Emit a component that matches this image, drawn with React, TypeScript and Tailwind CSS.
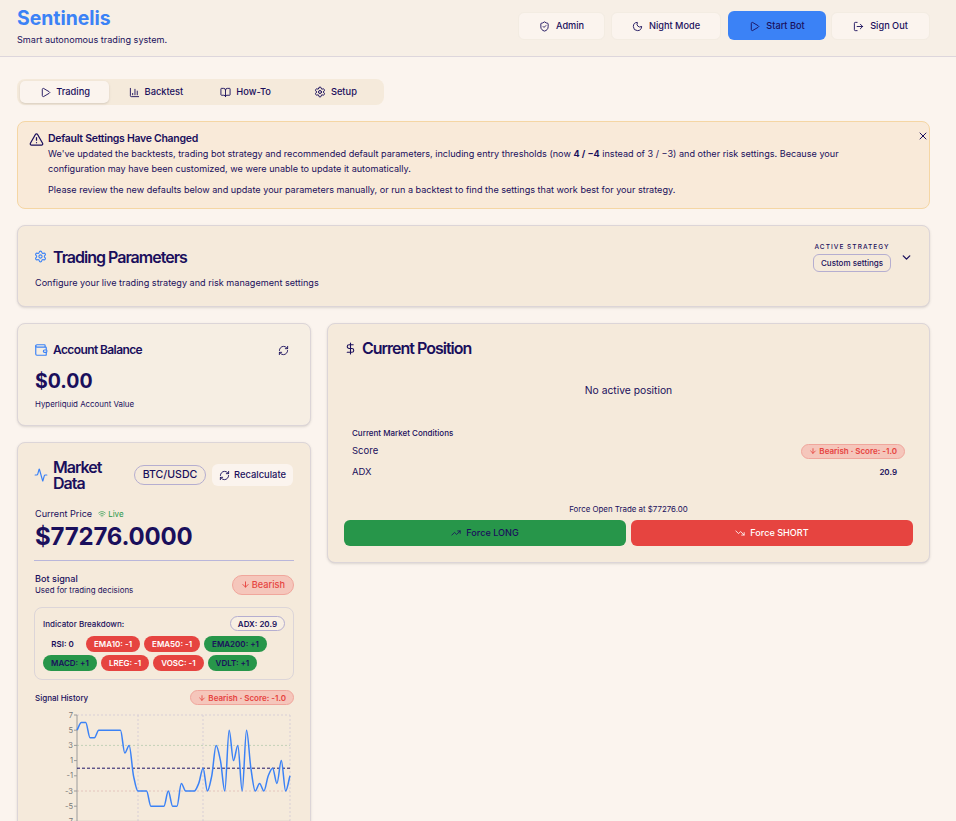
import React from "react";
import { ShieldCheck, Moon, Play, LogOut, ChartColumn, BookOpen, Settings, TriangleAlert, X, Wallet, RefreshCw, Activity, Wifi, ArrowDown, TrendingUp, TrendingDown, DollarSign, ChevronDown } from "lucide-react";

const vals = [5,6,6,4,4,5,5,5,5,5,5,2,3,-1,-3,-3,-3,-5,-5,-5,-5,-3,-5,-5,-2,-3,-3,-3,-2,0,-3,-1,3,1,-3,5,1,3,-3,5,0,-3,-2,-3,-1,0,-2,1,-3,-1];

function monotone(ys: number[], x0: number, dx: number, sy: (v: number) => number) {
  const pts = ys.map((v, i) => [x0 + i * dx, sy(v)]);
  const n = pts.length;
  const s: number[] = [];
  for (let i = 0; i < n - 1; i++) s.push((pts[i + 1][1] - pts[i][1]) / dx);
  const t: number[] = [s[0]];
  for (let i = 1; i < n - 1; i++) t.push(s[i - 1] * s[i] <= 0 ? 0 : (2 * s[i - 1] * s[i]) / (s[i - 1] + s[i]));
  t.push(s[n - 2]);
  let d = `M${pts[0][0]},${pts[0][1]}`;
  for (let i = 0; i < n - 1; i++) {
    d += `C${pts[i][0] + dx / 3},${pts[i][1] + (t[i] * dx) / 3} ${pts[i + 1][0] - dx / 3},${pts[i + 1][1] - (t[i + 1] * dx) / 3} ${pts[i + 1][0]},${pts[i + 1][1]}`;
  }
  return d;
}

function Chart() {
  const sy = (v: number) => 6 + (7 - v) * 7.6;
  const x0 = 43;
  const x1 = 256;
  const d = monotone(vals, x0, (x1 - x0) / (vals.length - 1), sy);
  return (
    <svg width="262" height="120" viewBox="0 0 262 120" className="block">
      <line x1={x0} x2={x1} y1={sy(7)} y2={sy(7)} stroke="#d8cfd6" strokeWidth="1" strokeDasharray="2 2" />
      <line x1={x0} x2={x1} y1={sy(3)} y2={sy(3)} stroke="#c3d2b8" strokeWidth="1" strokeDasharray="2 2" />
      <line x1={x0} x2={x1} y1={sy(-3)} y2={sy(-3)} stroke="#e4c4bc" strokeWidth="1" strokeDasharray="2 2" />
      {[104, 169, 256].map((x) => (
        <line key={x} x1={x} x2={x} y1={sy(7)} y2={sy(-7)} stroke="#d8cfd6" strokeWidth="1" strokeDasharray="2 2" />
      ))}
      <line x1={x0} x2={x0} y1={sy(7)} y2={sy(-7)} stroke="#9a9a9a" strokeWidth="1" />
      <line x1={x0} x2={x1} y1={sy(-7)} y2={sy(-7)} stroke="#9a9a9a" strokeWidth="1" />
      {[7, 5, 3, 1, -1, -3, -5, -7].map((v) => (
        <g key={v}>
          <line x1={x0 - 3} x2={x0} y1={sy(v)} y2={sy(v)} stroke="#9a9a9a" strokeWidth="1" />
          <text x={x0 - 4} y={sy(v) + 2.5} textAnchor="end" fontSize="7.5" fill="#777" fontFamily="Inter, sans-serif">{v}</text>
        </g>
      ))}
      <line x1={x0} x2={x1} y1={sy(0)} y2={sy(0)} stroke="#1e1466" strokeWidth="1" strokeDasharray="3 2" />
      <path d={d} fill="none" stroke="#3b82f6" strokeWidth="1.5" />
    </svg>
  );
}

function HeaderBtn({ icon, label, w }: { icon: React.ReactNode; label: string; w: string }) {
  return (
    <button className={`${w} h-[28px] pt-[1px] flex items-center justify-center gap-[6px] rounded-md border border-[#f3ece2] bg-[#fbf4ee] text-[9.2px] font-medium`}>
      {icon}
      {label}
    </button>
  );
}

function Tab({ icon, label, active, w }: { icon: React.ReactNode; label: string; active?: boolean; w: string }) {
  return (
    <div className={active ? "w-[90px] h-[22px] pl-[1px] flex items-center justify-center gap-[5px] rounded-[5px] bg-[#fbf4ee] text-[9.3px] font-medium shadow-sm" : `${w} h-[22px] pl-[1px] flex items-center justify-center gap-[5px] text-[9.3px] font-medium`}>
      {icon}
      {label}
    </div>
  );
}

function Pill({ children, red }: { children: React.ReactNode; red: boolean }) {
  return (
    <span className={red ? "h-[16px] px-[8px] flex items-center rounded-full bg-[#e64440] text-white text-[8px] font-semibold" : "h-[16px] px-[8px] flex items-center rounded-full bg-[#27964a] text-[#1a0f5c] text-[8px] font-semibold"}>
      {children}
    </span>
  );
}

function ScoreBadge() {
  return (
    <span className="h-[15px] px-[7px] flex items-center gap-[2px] rounded-full bg-[#f5c6bb] border border-[#f0a69c] text-[#e64440] text-[8px] font-semibold">
      <ArrowDown size={8} strokeWidth={2.5} />
      Bearish · Score: -1.0
    </span>
  );
}

const card = "rounded-lg border border-[#dcd5d8] bg-[#f5eadb] shadow-sm";

export default function App() {
  return (
    <div className="h-[821px] overflow-hidden bg-[#fbf4ee] text-[#1a0f5c]" style={{ fontFamily: "Inter, 'Liberation Sans', sans-serif" }}>
      <header className="h-[57px] border-b border-[#ddd6dc] bg-[#f7efe6] px-[17px] flex items-start justify-between">
        <div className="pt-[6px]">
          <h1 className="text-[19.4px] leading-[24px] font-bold text-[#3b82f6]">Sentinelis</h1>
          <p className="text-[9.1px] leading-[12px] mt-[4px]">Smart autonomous trading system.</p>
        </div>
        <div className="flex items-center pt-[11px] pr-[9px]">
          <HeaderBtn w="w-[87px]" icon={<ShieldCheck size={11} />} label="Admin" />
          <div className="w-[6px]" />
          <HeaderBtn w="w-[110px]" icon={<Moon size={11} />} label="Night Mode" />
          <div className="w-[7px]" />
          <button className="h-[29px] w-[98px] pt-[1px] flex items-center justify-center gap-[6px] rounded-md bg-[#3b82f6] text-[9.2px] font-medium">
            <Play size={11} />
            Start Bot
          </button>
          <div className="w-[5px]" />
          <HeaderBtn w="w-[99px]" icon={<LogOut size={11} />} label="Sign Out" />
        </div>
      </header>

      <main className="px-[17px] pt-[22px] pr-[26px]">
        <div className="w-[367px] h-[26px] flex items-center px-[3px] rounded-lg bg-[#f5eadb]">
          <Tab active w="" icon={<Play size={11} />} label="Trading" />
          <Tab w="w-[93px]" icon={<ChartColumn size={11} />} label="Backtest" />
          <Tab w="w-[88px]" icon={<BookOpen size={11} />} label="How-To" />
          <Tab w="w-[93px]" icon={<Settings size={12} />} label="Setup" />
        </div>

        <section className="relative mt-[16px] h-[88px] rounded-lg border border-[#f5d6a4] bg-[#f9ead9] pl-[30px] pt-[10px] pr-[60px]">
          <TriangleAlert size={15} className="absolute left-[11px] top-[10px]" />
          <X size={12} className="absolute right-0 top-[8px]" />
          <h3 className="text-[10.5px] leading-[13px] font-semibold tracking-[-0.28px]">Default Settings Have Changed</h3>
          <p className="text-[9.1px] leading-[15px] mt-[1px] whitespace-nowrap">We've updated the backtests, trading bot strategy and recommended default parameters, including entry thresholds (now <b>4 / −4</b> instead of 3 / −3) and other risk settings. Because your</p>
          <p className="text-[9.1px] leading-[15px] whitespace-nowrap">configuration may have been customized, we were unable to update it automatically.</p>
          <p className="text-[9.1px] leading-[15px] mt-[6px] whitespace-nowrap">Please review the new defaults below and update your parameters manually, or run a backtest to find the settings that work best for your strategy.</p>
        </section>

        <section className={`${card} mt-[16px] h-[82px] px-[17px] flex items-center justify-between`}>
          <div>
            <div className="flex items-center gap-[6px] pt-[3px] -ml-[1px]">
              <Settings size={13} className="text-[#3b82f6]" />
              <h2 className="text-[16px] leading-[20px] font-semibold tracking-[-1px]">Trading Parameters</h2>
            </div>
            <p className="text-[9.1px] leading-[12px] mt-[10px]">Configure your live trading strategy and risk management settings</p>
          </div>
          <div className="flex items-center gap-[9px] mb-[18px] -mr-[1px]">
            <div className="flex flex-col items-center gap-[2px]">
              <span className="text-[6.5px] leading-[9px] font-medium tracking-[0.16em]">ACTIVE STRATEGY</span>
              <span className="h-[18px] px-[7px] flex items-center rounded-md border border-[#b5aed0] text-[8px] font-medium">Custom settings</span>
            </div>
            <ChevronDown size={13} strokeWidth={2.5} />
          </div>
        </section>

        <div className="mt-[16px] flex items-start gap-[16px]">
          <div className="w-[294px] shrink-0 flex flex-col gap-[16px]">
            <section className="h-[103px] rounded-lg border border-[#dcd5d8] bg-[#f6eee3] shadow-sm px-[17px] pt-[18px]">
              <div className="flex items-center justify-between pr-[4px] -ml-[1px]">
                <div className="flex items-center gap-[5px]">
                  <Wallet size={14} className="text-[#3b82f6]" />
                  <h3 className="text-[12px] leading-[16px] font-semibold tracking-[-0.6px]">Account Balance</h3>
                </div>
                <RefreshCw size={11} />
              </div>
              <div className="text-[19.5px] leading-[24px] font-bold mt-[11px]">$0.00</div>
              <div className="text-[7.9px] leading-[10px] mt-[6px]">Hyperliquid Account Value</div>
            </section>

            <section className={`${card} h-[400px] px-[17px] pt-[16px]`}>
              <div className="flex items-center -ml-[1px]">
                <Activity size={14} className="text-[#3b82f6] mr-[5px] shrink-0" />
                <h3 className="w-[75px] shrink-0 text-[16px] leading-[16px] font-semibold tracking-[-1px]">Market Data</h3>
                <span className="h-[20px] w-[72px] ml-[6px] shrink-0 flex items-center justify-center rounded-full border border-[#b5aed0] text-[10.6px] font-medium">BTC/USDC</span>
                <span className="h-[22px] w-[81px] ml-[6px] shrink-0 flex items-center justify-center gap-[4px] rounded-md bg-[#fbf4ee] text-[9.4px] font-medium whitespace-nowrap">
                  <RefreshCw size={11} />
                  Recalculate
                </span>
              </div>
              <div className="flex items-center gap-[6px] mt-[17px]">
                <span className="text-[9.1px] leading-[12px]">Current Price</span>
                <span className="flex items-center gap-[2px] text-[8px] text-[#27964a]">
                  <Wifi size={8} />
                  Live
                </span>
              </div>
              <div className="text-[24px] leading-[30px] font-bold tracking-[-0.2px] mt-[2px]">$77276.0000</div>
              <div className="border-t border-[#b9b6da] mt-[8px] -mx-[1px]" />
              <div className="flex items-center justify-between mt-[12px] -mr-[1px]">
                <div>
                  <div className="text-[9.1px] leading-[12px] font-medium">Bot signal</div>
                  <div className="text-[7.9px] leading-[11px]">Used for trading decisions</div>
                </div>
                <span className="h-[20px] px-[8px] flex items-center gap-[2px] rounded-full bg-[#f5c6bb] border border-[#f0a69c] text-[#e64440] text-[9.2px] font-medium">
                  <ArrowDown size={9} strokeWidth={2.5} />
                  Bearish
                </span>
              </div>
              <div className="mt-[11px] -mx-[1px] h-[73px] rounded-lg border border-[#dcd5d8] px-[8px] pt-[8px]">
                <div className="flex items-center justify-between">
                  <span className="text-[8px] font-medium">Indicator Breakdown:</span>
                  <span className="h-[15px] px-[7px] flex items-center rounded-full border border-[#b5aed0] bg-[#f8efe3] text-[8px] font-semibold">ADX: 20.9</span>
                </div>
                <div className="flex flex-wrap items-center gap-x-[4px] gap-y-[3px] mt-[5px]">
                  <span className="h-[16px] w-[39px] flex items-center justify-center text-[8px] font-semibold">RSI: 0</span>
                  <Pill red>EMA10: -1</Pill>
                  <Pill red>EMA50: -1</Pill>
                  <Pill red={false}>EMA200: +1</Pill>
                  <Pill red={false}>MACD: +1</Pill>
                  <Pill red>LREG: -1</Pill>
                  <Pill red>VOSC: -1</Pill>
                  <Pill red={false}>VDLT: +1</Pill>
                </div>
              </div>
              <div className="flex items-center justify-between mt-[10px] -mr-[1px]">
                <span className="text-[8px] font-medium">Signal History</span>
                <ScoreBadge />
              </div>
              <div className="mt-[4px] -ml-[1px]"><Chart /></div>
            </section>
          </div>

          <section className={`${card} flex-1 h-[240px] px-[16px] pt-[14px]`}>
            <div className="flex items-center gap-[5px]">
              <DollarSign size={13} />
              <h2 className="text-[16px] leading-[20px] font-semibold tracking-[-1px]">Current Position</h2>
            </div>
            <p className="text-center text-[10.3px] leading-[14px] mt-[25px]">No active position</p>
            <div className="px-[8px] mt-[31px]">
              <div className="text-[8px] leading-[10px] font-medium">Current Market Conditions</div>
              <div className="flex items-center justify-between mt-[5px] h-[16px]">
                <span className="text-[9.5px]">Score</span>
                <ScoreBadge />
              </div>
              <div className="flex items-center justify-between mt-[5px] h-[16px] pr-[8px]">
                <span className="text-[9.5px]">ADX</span>
                <span className="text-[8px] font-semibold">20.9</span>
              </div>
            </div>
            <p className="text-center text-[7.9px] leading-[10px] mt-[24px]">Force Open Trade at $77276.00</p>
            <div className="flex gap-[5px] mt-[6px]">
              <button className="flex-1 h-[26px] flex items-center justify-center gap-[5px] rounded-md bg-[#27964a] text-[9.1px] font-medium">
                <TrendingUp size={10} />
                Force LONG
              </button>
              <button className="flex-1 h-[26px] flex items-center justify-center gap-[5px] rounded-md bg-[#e64440] text-white text-[9.1px] font-medium">
                <TrendingDown size={10} />
                Force SHORT
              </button>
            </div>
          </section>
        </div>
      </main>
    </div>
  );
}
